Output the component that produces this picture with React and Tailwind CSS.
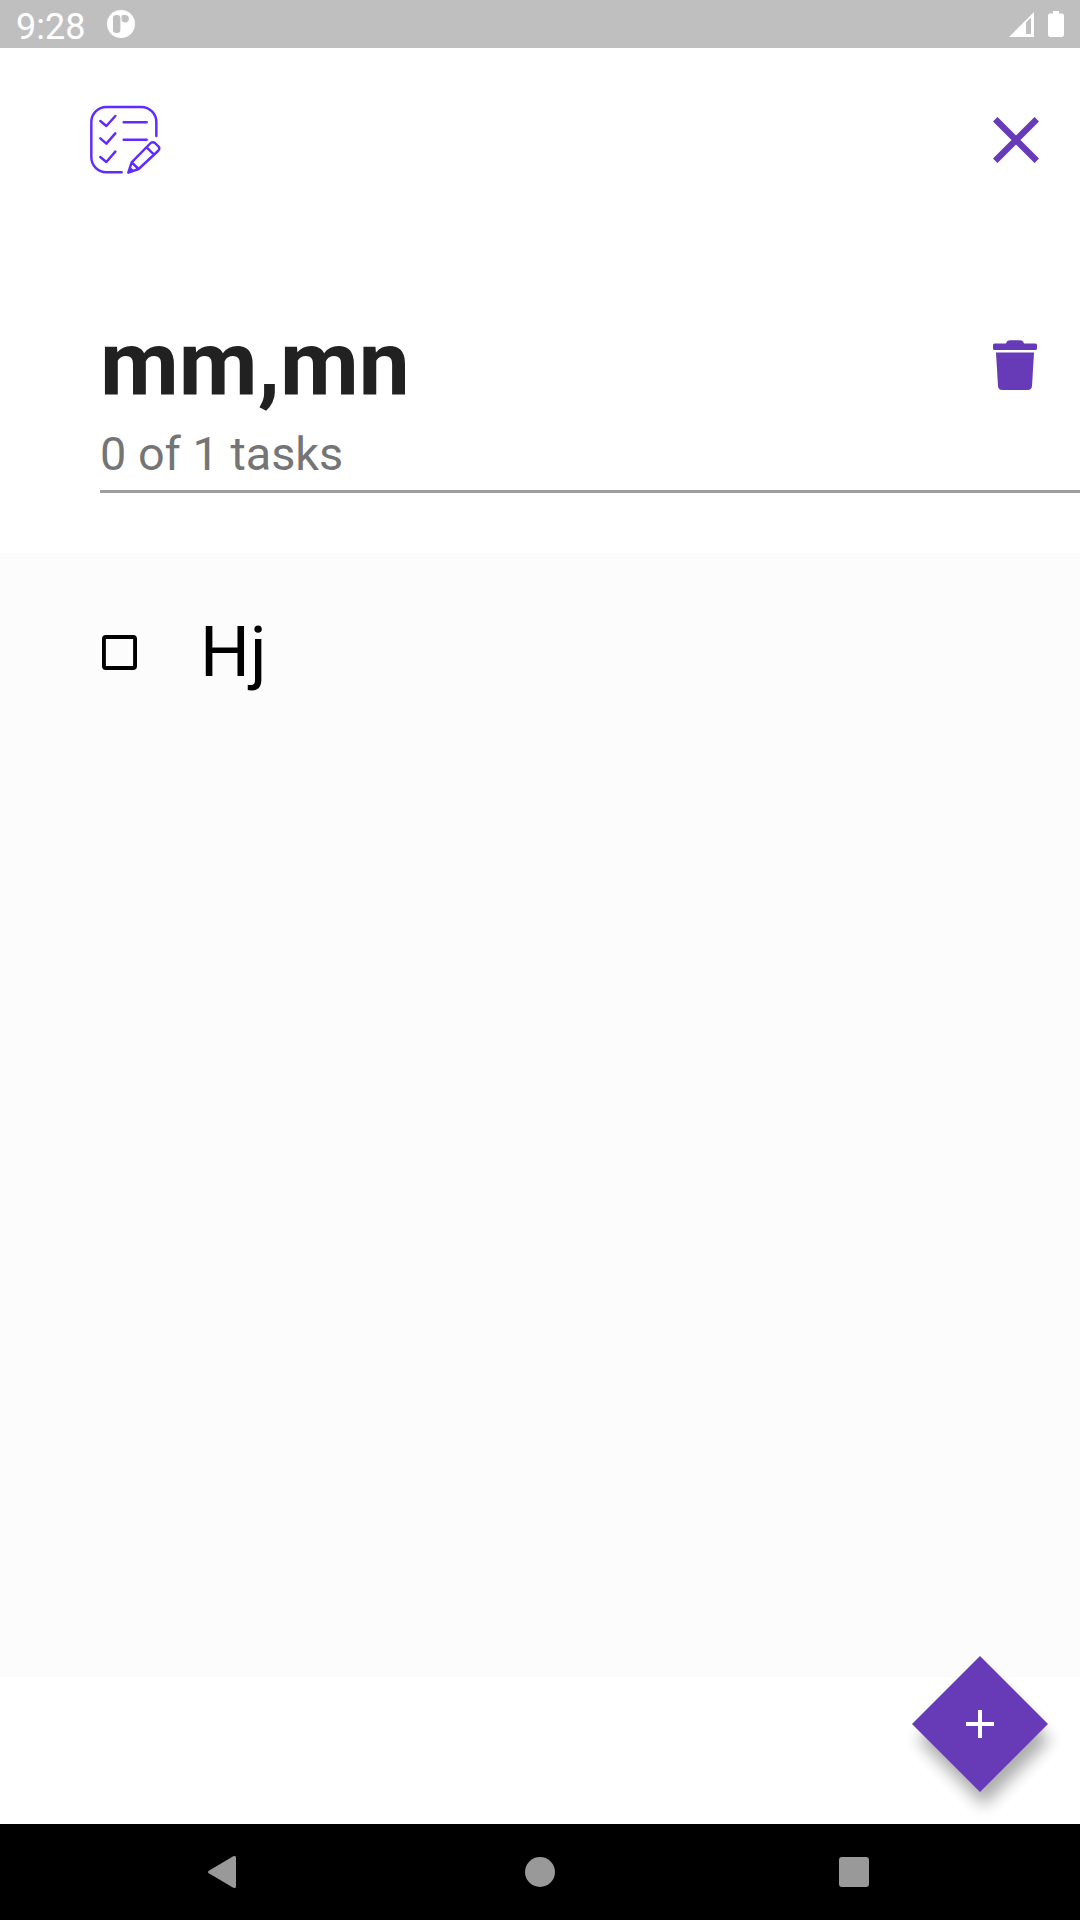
function StatusBar() {
  return (
    <header className="flex h-12 items-center bg-[#bfbfbf] pl-4 text-white">
      <span className="w-[91px] pt-[6px] text-[36px] leading-[48px]">9:28</span>
      <svg className="h-7 w-7" viewBox="0 0 28 28">
        <circle cx="14" cy="14" r="14" fill="#fff" />
        <rect x="6" y="5" width="7.400" height="18" rx="3.200" fill="#bfbfbf" />
        <path
          d="M16 5h2.200a3.700 3.700 0 1 1-3.700 3.700V6.500Q14.500 5 16 5Z"
          fill="#bfbfbf"
        />
      </svg>
      <svg className="ml-auto mr-[14px] h-[25px] w-[25px]" viewBox="0 0 25 25">
        <path fill="#fff" fillRule="evenodd" d="M0 25 25 0v25ZM17 10.500V22h5V5.500Z" />
      </svg>
      <svg className="mr-4 h-[26px] w-4" viewBox="0 0 16 26">
        <path fill="#fff" d="M5 0h6v2.500h3.500L16 4v20.500L14.500 26h-13L0 24.500V4l1.500-1.500H5Z" />
      </svg>
    </header>
  );
}

function ChecklistLogo() {
  return (
    <svg
      className="h-[90px] w-[90px]"
      viewBox="0 0 270 270"
      fill="none"
      stroke="#5f2bff"
      strokeWidth="7.400"
      strokeLinecap="round"
      strokeLinejoin="round"
    >
      <path d="M125 232H79a45 45 0 0 1-45-45V81a45 45 0 0 1 45-45h105a45 45 0 0 1 45 45v42" />
      <path d="m61 78 18 15 27-30M61 130l18 16 27-31M61 186l18 15 27-31M131 82h69M131 134h69" />
      <path d="m145 233 10-31 54-55q8-9 17-2l8 8q8 7 0 15l-58 54ZM155 202l21 20M200 157l22 22M149 220l10 8" />
    </svg>
  );
}

function TopBar() {
  return (
    <div className="flex h-[184px] items-start justify-between pl-20 pr-[41px] pt-[47px]">
      <ChecklistLogo />
      <svg className="mt-[22px] h-[46px] w-[46px]" viewBox="0 0 46 46">
        <path d="m2.200 2.200 41.600 41.600m0-41.600L2.200 43.800" stroke="#673ab7" strokeWidth="6.4" />
      </svg>
    </div>
  );
}

function ListHeader() {
  return (
    <section className="flex h-[321px] flex-col pl-[100px]">
      <div className="flex h-[193px] items-start justify-between pr-[43px] pt-[78px]">
        <h1 className="pt-px text-[91px] font-bold leading-[106px] text-[#212121]">mm,mn</h1>
        <svg className="mt-[30px] h-[50px] w-11" viewBox="0 0 44 50" fill="#673ab7">
          <path d="M1.500 3.500H13Q14 .3 17 .3h10q3 0 4 3.200h11.500Q44 3.500 44 5v3.500Q44 10 42.500 10h-41Q0 10 0 8.500V5q0-1.500 1.500-1.500Z" />
          <path d="M3 12.500h38l-2 33.500q-.3 4-4.300 4H9.300q-4 0-4.300-4Z" />
        </svg>
      </div>
      <p className="h-[65px] pt-[2px] text-[46.8px] leading-[54px] text-[#757575]">0 of 1 tasks</p>
      <div className="h-[3px] bg-[#9e9e9e]" />
    </section>
  );
}

function TaskList() {
  return (
    <main className="h-[1124px] bg-[#fcfcfc]">
      <label className="flex h-[198px] items-center pl-[102px]">
        <svg className="h-[35px] w-[35px]" viewBox="0 0 18 18">
          <path
            fillRule="evenodd"
            d="M2 0h14a2 2 0 0 1 2 2v14a2 2 0 0 1-2 2H2a2 2 0 0 1-2-2V2a2 2 0 0 1 2-2Zm0 2v14h14V2Z"
          />
        </svg>
        <span className="ml-[63px] text-[70px] leading-[82px] text-black">Hj</span>
      </label>
    </main>
  );
}

function AddButton() {
  return (
    <button className="relative -top-[21px] ml-auto mr-8 block h-[136px] w-[136px]" aria-label="Add task">
      <svg className="h-full w-full overflow-visible" viewBox="0 0 136 136">
        <defs>
          <filter id="soft" x="-30%" y="-30%" width="160%" height="160%">
            <feGaussianBlur stdDeviation="8" />
          </filter>
        </defs>
        <path d="m72 18 66 66-66 66L6 84Z" fill="#000" opacity=".32" filter="url(#soft)" />
        <path d="m68 0 68 68-68 68L0 68Z" fill="#673ab7" />
        <path d="M54 68h28M68 54v28" stroke="#fff" strokeWidth="4" />
      </svg>
    </button>
  );
}

function NavigationBar() {
  return (
    <nav className="relative flex h-24 items-center bg-black pl-[208px]">
      <svg className="h-8 w-7" viewBox="0 0 28 32">
        <path d="M.8 14.700 25.300.3Q28-.8 28 2v28q0 2.800-2.700 1.700L.8 17.300Q-.8 16 .8 14.700Z" fill="#999" />
      </svg>
      <span className="ml-[289px] h-[30px] w-[30px] rounded-full bg-[#999]" />
      <span className="ml-[284px] h-[30px] w-[30px] rounded-[3px] bg-[#999]" />
    </nav>
  );
}

export default function App() {
  return (
    <div className="flex h-[1920px] w-[1080px] flex-col overflow-hidden bg-white font-['Roboto',sans-serif]">
      <StatusBar />
      <TopBar />
      <ListHeader />
      <TaskList />
      <div className="h-[147px]">
        <AddButton />
      </div>
      <NavigationBar />
    </div>
  );
}
